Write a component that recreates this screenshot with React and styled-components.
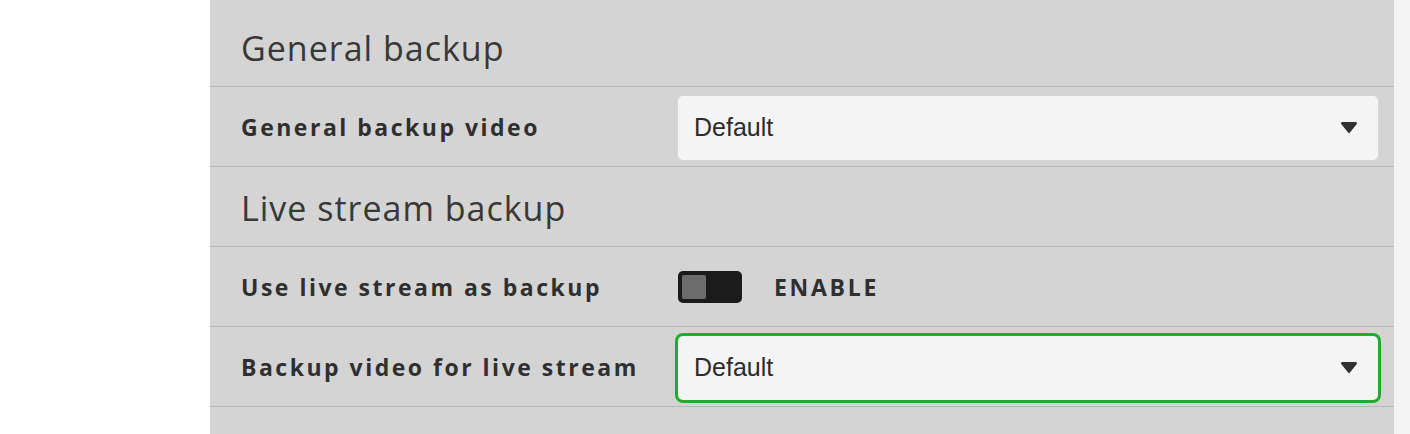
import React, { useState } from "react";
import styled, { createGlobalStyle } from "styled-components";

const GlobalStyle = createGlobalStyle`
  html, body {
    margin: 0;
    padding: 0;
    background: #ffffff;
  }
  body {
    font-family: "Open Sans", "Liberation Sans", sans-serif;
  }
`;

const Page = styled.div`
  display: grid;
  grid-template-columns: 210px 1184px 1fr;
  height: 434px;
  overflow: hidden;
`;

const Sidebar = styled.div`
  background: #ffffff;
`;

const Gutter = styled.div`
  background: #f4f4f4;
`;

const Panel = styled.div`
  background: #d4d4d4;
  padding-top: 7px;
`;

const Row = styled.div`
  display: flex;
  align-items: center;
  height: 79px;
  padding: 0 16px 0 31px;
  border-bottom: 1px solid #b6b6b6;
`;

const SectionTitle = styled.h2`
  margin: 0;
  padding-top: 2px;
  font-size: 34px;
  font-weight: 400;
  letter-spacing: 1px;
  color: #383838;
`;

const Label = styled.div`
  width: 437px;
  flex-shrink: 0;
  padding-top: 1px;
  font-size: 23px;
  font-weight: 700;
  letter-spacing: 2.5px;
  color: #2f2f2f;
`;

const SelectBox = styled.div`
  flex: 1;
  display: flex;
  align-items: center;
  justify-content: space-between;
  height: 64px;
  padding: 0 21px 0 16px;
  margin-top: 2px;
  box-sizing: border-box;
  background: #f4f4f4;
  border-radius: 5px;
  box-shadow: ${(props) => (props.focused ? "0 0 0 3px #22ac2f" : "none")};
  font-family: "Liberation Sans", Arial, sans-serif;
  font-size: 25px;
  color: #2b2b2b;
  cursor: pointer;
`;

const Caret = styled.svg`
  width: 16px;
  height: 11px;
  fill: #303030;
`;

const ToggleWrap = styled.div`
  display: flex;
  align-items: center;
  gap: 32px;
`;

const Track = styled.button`
  display: flex;
  align-items: center;
  width: 64px;
  height: 32px;
  padding: 0 4px;
  border: none;
  border-radius: 5px;
  background: #1b1b1b;
  cursor: pointer;
  justify-content: ${(props) => (props.on ? "flex-end" : "flex-start")};
`;

const Knob = styled.span`
  display: block;
  width: 24px;
  height: 24px;
  border-radius: 2px;
  background: #6c6c6c;
`;

const ToggleText = styled.span`
  padding-top: 1px;
  font-size: 23px;
  font-weight: 700;
  letter-spacing: 2.7px;
  color: #2f2f2f;
`;

function Select({ value, focused }) {
  return (
    <SelectBox focused={focused}>
      <span>{value}</span>
      <Caret viewBox="0 0 16 11">
        <path d="M1.4 0h13.2c1.2 0 1.8 1.3 1 2.2L8.9 10.6c-.5.6-1.3.6-1.8 0L.4 2.2C-.4 1.3.2 0 1.4 0z" />
      </Caret>
    </SelectBox>
  );
}

export default function App() {
  const [liveBackup, setLiveBackup] = useState(false);

  return (
    <>
      <GlobalStyle />
      <Page>
        <Sidebar />
        <Panel>
          <Row>
            <SectionTitle>General backup</SectionTitle>
          </Row>
          <Row>
            <Label>General backup video</Label>
            <Select value="Default" />
          </Row>
          <Row>
            <SectionTitle>Live stream backup</SectionTitle>
          </Row>
          <Row>
            <Label>Use live stream as backup</Label>
            <ToggleWrap>
              <Track on={liveBackup} onClick={() => setLiveBackup(!liveBackup)}>
                <Knob />
              </Track>
              <ToggleText>ENABLE</ToggleText>
            </ToggleWrap>
          </Row>
          <Row>
            <Label>Backup video for live stream</Label>
            <Select value="Default" focused />
          </Row>
        </Panel>
        <Gutter />
      </Page>
    </>
  );
}
